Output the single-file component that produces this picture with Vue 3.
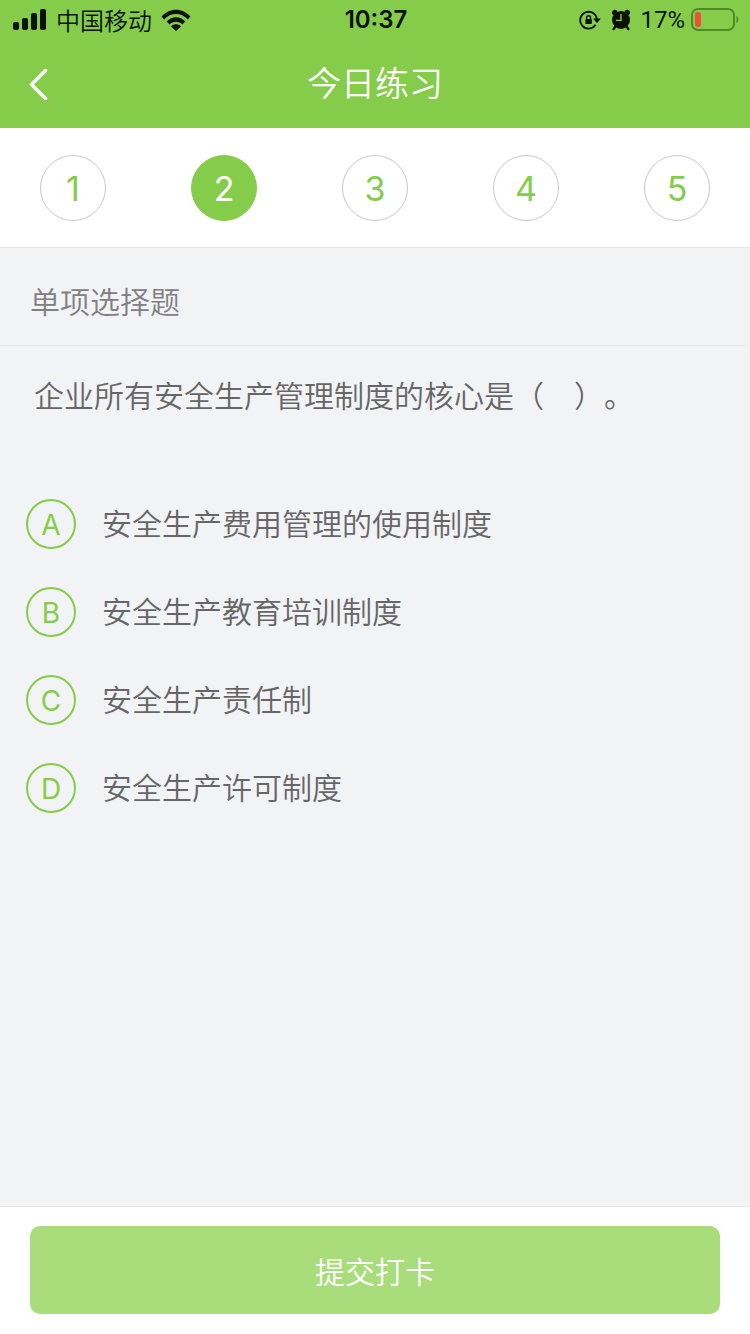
<template>
  <div class="page">
    <header class="header">
      <div class="status">
        <div class="status__left">
          <svg class="icon" width="34" height="22" viewBox="0 0 34 22" aria-hidden="true">
            <rect x="0" y="13" width="6" height="8" rx="2" />
            <rect x="9" y="9" width="6" height="12" rx="2" />
            <rect x="18" y="4" width="6" height="17" rx="2" />
            <rect x="27" y="0" width="6" height="21" rx="2" />
          </svg>
          <span class="status__carrier">中国移动</span>
          <svg class="icon" width="30" height="22" viewBox="0 0 30 22" aria-hidden="true">
            <path d="M0.5 7.6C8.5 -1.6 21.5 -1.6 29.5 7.6L26.7 10.4C20.2 3.2 9.8 3.2 3.3 10.4Z" />
            <path d="M5.6 12.6C10.9 6.9 19.1 6.9 24.4 12.6L21.5 15.4C17.8 11.7 12.2 11.7 8.5 15.4Z" />
            <path d="M10 17.2C12.9 14.6 17.1 14.6 20 17.2L15 22Z" />
          </svg>
        </div>
        <time class="status__time">10:37</time>
        <div class="status__right">
          <svg class="icon" width="22" height="20" viewBox="0 0 22 20" aria-hidden="true">
            <path d="M16.6 14.8A8.4 8.4 0 1 1 17.9 9" fill="none" stroke="#0b1204" stroke-width="1.8" />
            <path d="M14.2 8.6H21.8L18 13.2Z" />
            <rect x="6.4" y="9" width="6.4" height="5" rx="0.8" />
            <path d="M7.7 9.200V7.600a1.900 1.900 0 0 1 3.800 0V9.200" fill="none" stroke="#0b1204" stroke-width="1.400" />
          </svg>
          <svg class="icon icon--alarm" width="20" height="22" viewBox="0 0 20 22" aria-hidden="true">
            <circle cx="10" cy="11" r="9" />
            <path d="M1.400 5.200A3 3 0 0 1 5.600 1.200L6.500 3L3 6.500ZM18.600 5.200A3 3 0 0 0 14.400 1.200L13.500 3L17 6.500Z" />
            <path d="M4.500 17.500L2.600 20M15.500 17.500L17.400 20" stroke="#0b1204" stroke-width="2.400" stroke-linecap="round" />
            <path d="M10 5V11.400H5" fill="none" stroke="#86cc4b" stroke-width="1.400" />
          </svg>
          <span class="status__percent">17%</span>
          <svg class="icon" width="48" height="24" viewBox="0 0 48 24" aria-hidden="true">
            <rect x="1" y="1" width="42" height="21" rx="6" fill="none" stroke="#528a25" stroke-width="2" />
            <rect x="4" y="4" width="6" height="15" rx="3" fill="#f04e38" />
            <path d="M45.500 8C48 9 48 14 45.500 15Z" fill="#528a25" />
          </svg>
        </div>
      </div>
      <div class="nav">
        <button class="nav__back" type="button" aria-label="返回">
          <svg width="20" height="32" viewBox="0 0 20 32" aria-hidden="true">
            <path d="M16.500 2.500L2.500 16.500L16.500 30.500" fill="none" stroke="#fff" stroke-width="3.500" stroke-linecap="round" />
          </svg>
        </button>
        <h1 class="nav__title">今日练习</h1>
      </div>
    </header>

    <nav class="steps">
      <button
        v-for="n in 5"
        :key="n"
        type="button"
        class="step"
        :class="{ 'step--active': n === current }"
        @click="current = n"
      >
        {{ n }}
      </button>
    </nav>

    <main class="content">
      <h2 class="type">单项选择题</h2>
      <p id="question" class="question">{{ question.text }}</p>

      <div class="answers" role="radiogroup" aria-labelledby="question">
        <label v-for="answer in question.answers" :key="answer.key" class="answer">
          <span class="answer__mark">
            <input v-model="selected" class="answer__radio" type="radio" name="answer" :value="answer.key" />
            <span class="answer__key">{{ answer.key }}</span>
          </span>
          <span class="answer__text">{{ answer.text }}</span>
        </label>
      </div>
    </main>

    <footer class="footer">
      <button class="submit" type="button">提交打卡</button>
    </footer>
  </div>
</template>

<script setup>
import { ref } from 'vue';

const current = ref(2);
const selected = ref('');

const question = {
  text: '企业所有安全生产管理制度的核心是（\u3000）。',
  answers: [
    { key: 'A', text: '安全生产费用管理的使用制度' },
    { key: 'B', text: '安全生产教育培训制度' },
    { key: 'C', text: '安全生产责任制' },
    { key: 'D', text: '安全生产许可制度' }
  ]
};
</script>

<style>
body {
  margin: 0;
}
</style>

<style scoped>
.page {
  display: flex;
  flex-direction: column;
  min-height: 100vh;
  background: #f2f3f5;
  color: #666;
  font-family: Inter, "Noto Sans CJK SC", sans-serif;
  font-size: 30px;
  font-weight: 350;
  text-spacing-trim: space-all;
}

button {
  padding: 0;
  border: none;
  background: none;
  font: inherit;
  cursor: pointer;
}

.header {
  background: #86cc4b;
}

.status {
  display: grid;
  grid-template-columns: 1fr auto 1fr;
  align-items: center;
  height: 40px;
  padding: 0 11px 0 13px;
  color: #0b1204;
  font-size: 24px;
  line-height: 40px;
}

.status__left,
.status__right {
  display: flex;
  align-items: center;
  gap: 9px;
}

.status__right {
  justify-content: flex-end;
  gap: 6px;
}

.status__carrier {
  font-family: "Noto Sans CJK SC", sans-serif;
}

.status__percent {
  font-family: Roboto, sans-serif;
  font-weight: 400;
}

.status__time {
  font-weight: 600;
}

.icon {
  flex: none;
  fill: #0b1204;
}

.icon--alarm {
  margin: 0 3px 0 4px;
}

.nav {
  display: grid;
  grid-template-columns: 60px 1fr 60px;
  align-items: center;
  height: 88px;
}

.nav__back {
  display: flex;
  align-items: center;
  height: 88px;
  padding-left: 29px;
}

.nav__title {
  margin: 0;
  color: #fff;
  font-size: 34px;
  font-weight: 350;
  line-height: 48px;
  text-align: center;
}

.steps {
  display: flex;
  justify-content: space-between;
  padding: 27px 40px 26px;
  border-bottom: 1px solid #e6e6e6;
  background: #fff;
}

.step {
  width: 66px;
  height: 66px;
  border: 1px solid #c8c8c8;
  border-radius: 50%;
  color: #86cc4b;
  font-size: 34px;
  font-weight: 400;
}

.step--active {
  border-color: #86cc4b;
  background: #86cc4b;
  color: #fff;
}

.content {
  flex: 1;
}

.type {
  margin: 0;
  padding: 32px 30px 21px;
  border-bottom: 1px solid #e6e7e9;
  color: #808080;
  font-size: 30px;
  font-weight: 350;
  line-height: 44px;
}

.question {
  margin: 0;
  padding: 28px 34px;
  line-height: 44px;
}

.answers {
  display: flex;
  flex-direction: column;
  gap: 38px;
  padding: 53px 26px;
}

.answer {
  display: flex;
  align-items: center;
  gap: 26px;
  line-height: 50px;
  cursor: pointer;
}

.answer__mark {
  display: grid;
  flex: none;
  width: 50px;
  height: 50px;
  color: #86cc4b;
  font-size: 28px;
  font-weight: 400;
  text-align: center;
}

/* la lettre est posée sur le bouton radio, dans la même cellule */
.answer__radio,
.answer__key {
  grid-area: 1 / 1;
}

.answer__radio {
  width: 50px;
  height: 50px;
  margin: 0;
  border: 2px solid #86cc4b;
  border-radius: 50%;
  appearance: none;
  cursor: pointer;
}

.answer__radio:checked {
  background: #86cc4b;
}

.answer__radio:checked + .answer__key {
  color: #fff;
}

.answer__key {
  z-index: 1;
  line-height: 52px;
}

.footer {
  padding: 19px 30px 20px;
  border-top: 1px solid #e6e7e9;
  background: #fff;
}

.submit {
  display: block;
  width: 100%;
  height: 88px;
  border-radius: 10px;
  background: #a9dc7a;
  color: #fff;
}
</style>
